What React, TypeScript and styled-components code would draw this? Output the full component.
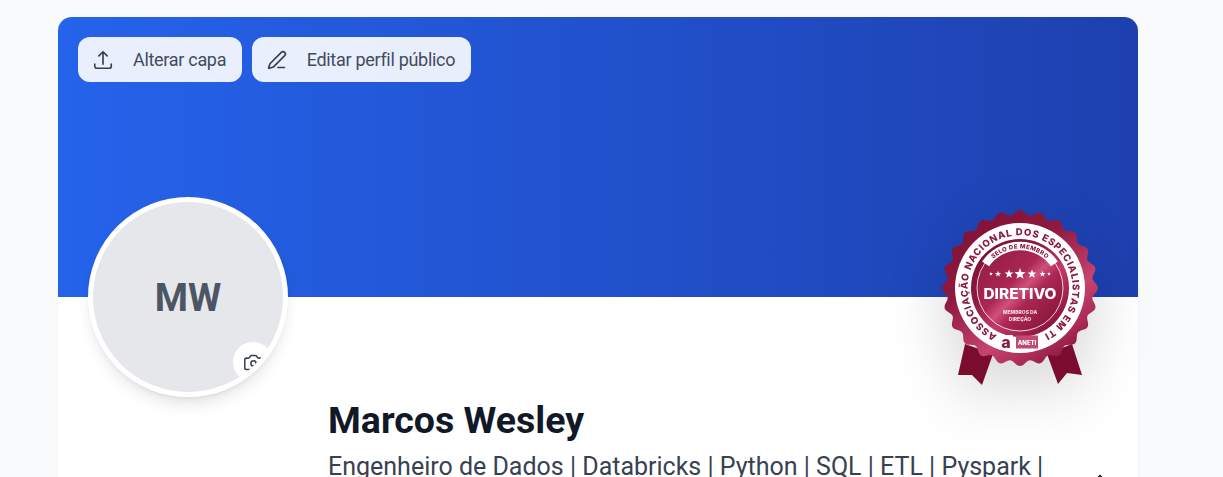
import React from 'react';
import styled, { createGlobalStyle } from 'styled-components';
import { Camera, PenLine, Share } from 'lucide-react';
import { HiOutlineArrowUpTray } from 'react-icons/hi2';

const GlobalStyle = createGlobalStyle`
    html, body {
        margin: 0;
        height: 100%;
        overflow: hidden;
        background: #f9fafb;
        font-family: Roboto, 'Liberation Sans', sans-serif;
    }
`;

const Page = styled.main`
    padding: 17px 0 0 58px;
`;

const Card = styled.section`
    position: relative;
    width: 1080px;
    background: #fff;
    border-radius: 14px;
    box-shadow: 0 1px 3px rgba(0, 0, 0, 0.04);
`;

const Cover = styled.header`
    display: flex;
    align-items: flex-start;
    gap: 10px;
    height: 280px;
    box-sizing: border-box;
    padding: 20px;
    border-radius: 14px 14px 0 0;
    background: linear-gradient(to right, #2563eb, #1e40af);
`;

const CoverButton = styled.button`
    display: flex;
    align-items: center;
    gap: 18px;
    height: 45px;
    padding: 0 15.5px 0 13px;
    border: 0;
    border-radius: 12px;
    background: rgba(255, 255, 255, 0.9);
    color: #434b5c;
    font: 400 18px Roboto, sans-serif;
    letter-spacing: -0.3px;
`;

const IconSlot = styled.span`
    display: flex;
    align-items: center;
    justify-content: center;
    width: 24px;
    color: #374151;
`;

const Avatar = styled.div`
    position: absolute;
    left: 30px;
    top: 180px;
    display: flex;
    align-items: center;
    justify-content: center;
    width: 200px;
    height: 200px;
    box-sizing: border-box;
    padding-top: 2px;
    overflow: hidden;
    border: 5px solid #fff;
    border-radius: 50%;
    background: #e5e7eb;
    color: #4b5563;
    font-size: 38px;
    font-weight: 700;
`;

const AvatarShadow = styled.div`
    position: absolute;
    left: 30px;
    top: 180px;
    width: 200px;
    height: 200px;
    border-radius: 50%;
    box-shadow: 0 10px 15px -3px rgba(0, 0, 0, 0.1), 0 4px 6px -4px rgba(0, 0, 0, 0.1);
`;

const CameraButton = styled.span`
    position: absolute;
    left: 140px;
    top: 140px;
    display: flex;
    align-items: center;
    justify-content: center;
    width: 40px;
    height: 40px;
    border-radius: 50%;
    background: #fff;
    color: #374151;
`;

const Info = styled.div`
    display: flex;
    justify-content: space-between;
    padding: 100px 28px 40px 270px;
`;

const Identity = styled.div`
    flex: 0 0 730px;
`;

const Name = styled.h1`
    margin: 0;
    color: #111827;
    font-size: 37.5px;
    line-height: 46px;
    font-weight: 700;
`;

const Headline = styled.p`
    margin: 8px 0 0;
    color: #374151;
    font-size: 25px;
    line-height: 32px;
`;

const ShareAction = styled.span`
    display: flex;
    margin-top: 77px;
    color: #1f2937;
`;

const BadgeWrap = styled.div`
    position: absolute;
    right: 30px;
    top: 183px;
    width: 176px;
    height: 190px;
    filter: drop-shadow(0 20px 30px rgba(0, 0, 0, 0.16));
`;

const scallopPath = (() => {
    const pts: string[] = [];
    const teeth = 24;
    for (let i = 0; i < 360; i++) {
        const a = (i * Math.PI) / 180;
        const r = 75.5 + 2.5 * Math.cos(teeth * a);
        pts.push(`${(88 + r * Math.sin(a)).toFixed(2)},${(88 - r * Math.cos(a)).toFixed(2)}`);
    }
    return `M${pts.join('L')}Z`;
})();

const starPoints = (cx: number, cy: number, r: number) => {
    const pts: string[] = [];
    for (let i = 0; i < 10; i++) {
        const a = (i * Math.PI) / 5;
        const d = i % 2 ? r * 0.42 : r;
        pts.push(`${(cx + d * Math.sin(a)).toFixed(2)},${(cy - d * Math.cos(a)).toFixed(2)}`);
    }
    return pts.join(' ');
};

const stars: [number, number][] = [
    [-29, 2],
    [-22, 3.2],
    [-11, 4.6],
    [0, 6],
    [12, 4.6],
    [22.5, 3.2],
    [29, 2],
];

const BadgeText = styled.text`
    font-family: Inter, 'Open Sans', sans-serif;
    font-weight: 800;
`;

const Badge = () => (
    <BadgeWrap>
        <svg width='176' height='190' viewBox='0 0 176 190'>
            <defs>
                <linearGradient id='rim' x1='0.1' y1='0.05' x2='0.9' y2='0.95'>
                    <stop offset='0' stopColor='#7a0f30' />
                    <stop offset='0.35' stopColor='#8f1a40' />
                    <stop offset='0.6' stopColor='#c23a68' />
                    <stop offset='0.78' stopColor='#a82553' />
                    <stop offset='1' stopColor='#7a0c2e' />
                </linearGradient>
                <linearGradient id='rimFlip' x1='0.05' y1='0' x2='0.75' y2='1'>
                    <stop offset='0' stopColor='#7d0f33' />
                    <stop offset='0.4' stopColor='#8f1a40' />
                    <stop offset='0.72' stopColor='#c8436f' />
                    <stop offset='0.88' stopColor='#a82a55' />
                    <stop offset='1' stopColor='#861238' />
                </linearGradient>
                <linearGradient id='disc' x1='0' y1='0' x2='1' y2='1'>
                    <stop offset='0' stopColor='#8d1a41' />
                    <stop offset='0.42' stopColor='#aa2752' />
                    <stop offset='0.52' stopColor='#d0507b' />
                    <stop offset='0.62' stopColor='#aa2752' />
                    <stop offset='1' stopColor='#7e0f33' />
                </linearGradient>
                <path id='ringArc' d='M 65 135 A 52.5 52.5 0 1 1 111 135' />
                <path id='seloArc' d='M 55.6 65.3 A 39.5 39.5 0 0 1 120.4 65.3' />
            </defs>
            <polygon points='33,144 61,154 50,185 40,175 26,175' fill='#7a0c2e' />
            <polygon points='115,154 140,144 150,175 135,173 126,184' fill='#7a0c2e' />
            <path d={scallopPath} fill='url(#rimFlip)' />
            <circle cx='88' cy='88' r='65' fill='#fff' />
            <circle cx='88' cy='88' r='49' fill='url(#rim)' />
            <circle cx='88' cy='88' r='43' fill='url(#disc)' stroke='#fff' strokeWidth='0.8' />
            <path
                d='M 53.6 63.9 A 42 42 0 0 1 122.4 63.9'
                fill='none'
                stroke='#fff'
                strokeWidth='8.5'
            />
            <BadgeText fill='#8a1a40' fontSize='9.6'>
                <textPath href='#ringArc' textLength='280' lengthAdjust='spacing'>
                    ASSOCIAÇÃO NACIONAL DOS ESPECIALISTAS EM TI
                </textPath>
            </BadgeText>
            <BadgeText fill='#8a1a40' fontSize='6' fontWeight='600' letterSpacing='0.35' textAnchor='middle'>
                <textPath href='#seloArc' startOffset='50%'>
                    SELO DE MEMBRO
                </textPath>
            </BadgeText>
            {stars.map(([dx, r]) => (
                <polygon key={dx} points={starPoints(88 + dx, 74, r)} fill='#fff' />
            ))}
            <BadgeText
                x='51.5'
                y='98.5'
                fill='#fff'
                fontSize='14'
                fontWeight='600'
                textLength='73'
                lengthAdjust='spacingAndGlyphs'
            >
                DIRETIVO
            </BadgeText>
            <BadgeText x='88' y='114' fill='#f6d5df' fontSize='5' fontWeight='500' textAnchor='middle'>
                MEMBROS DA
            </BadgeText>
            <BadgeText x='88' y='120.5' fill='#f6d5df' fontSize='5' fontWeight='500' textAnchor='middle'>
                DIREÇÃO
            </BadgeText>
            <rect x='67' y='135' width='14' height='15' rx='1' fill='#fff' />
            <BadgeText x='74' y='147.5' fill='#8a1a40' fontSize='16' textAnchor='middle'>
                a
            </BadgeText>
            <rect x='84' y='135.5' width='22' height='13' fill='#c24a72' />
            <BadgeText x='95' y='145' fill='#fff' fontSize='6' textAnchor='middle'>
                ANETI
            </BadgeText>
        </svg>
    </BadgeWrap>
);

export default function App() {
    return (
        <Page>
            <GlobalStyle />
            <Card>
                <Cover>
                    <CoverButton>
                        <IconSlot>
                            <HiOutlineArrowUpTray size={22} strokeWidth={1.8} />
                        </IconSlot>
                        Alterar capa
                    </CoverButton>
                    <CoverButton>
                        <IconSlot>
                            <PenLine size={20} strokeWidth={2} />
                        </IconSlot>
                        Editar perfil público
                    </CoverButton>
                </Cover>
                <AvatarShadow />
                <Avatar>
                    MW
                    <CameraButton>
                        <Camera size={21} strokeWidth={1.75} />
                    </CameraButton>
                </Avatar>
                <Badge />
                <Info>
                    <Identity>
                        <Name>Marcos Wesley</Name>
                        <Headline>
                            Engenheiro de Dados | Databricks | Python | SQL | ETL | Pyspark |
                        </Headline>
                    </Identity>
                    <ShareAction>
                        <Share size={20} />
                    </ShareAction>
                </Info>
            </Card>
        </Page>
    );
}
